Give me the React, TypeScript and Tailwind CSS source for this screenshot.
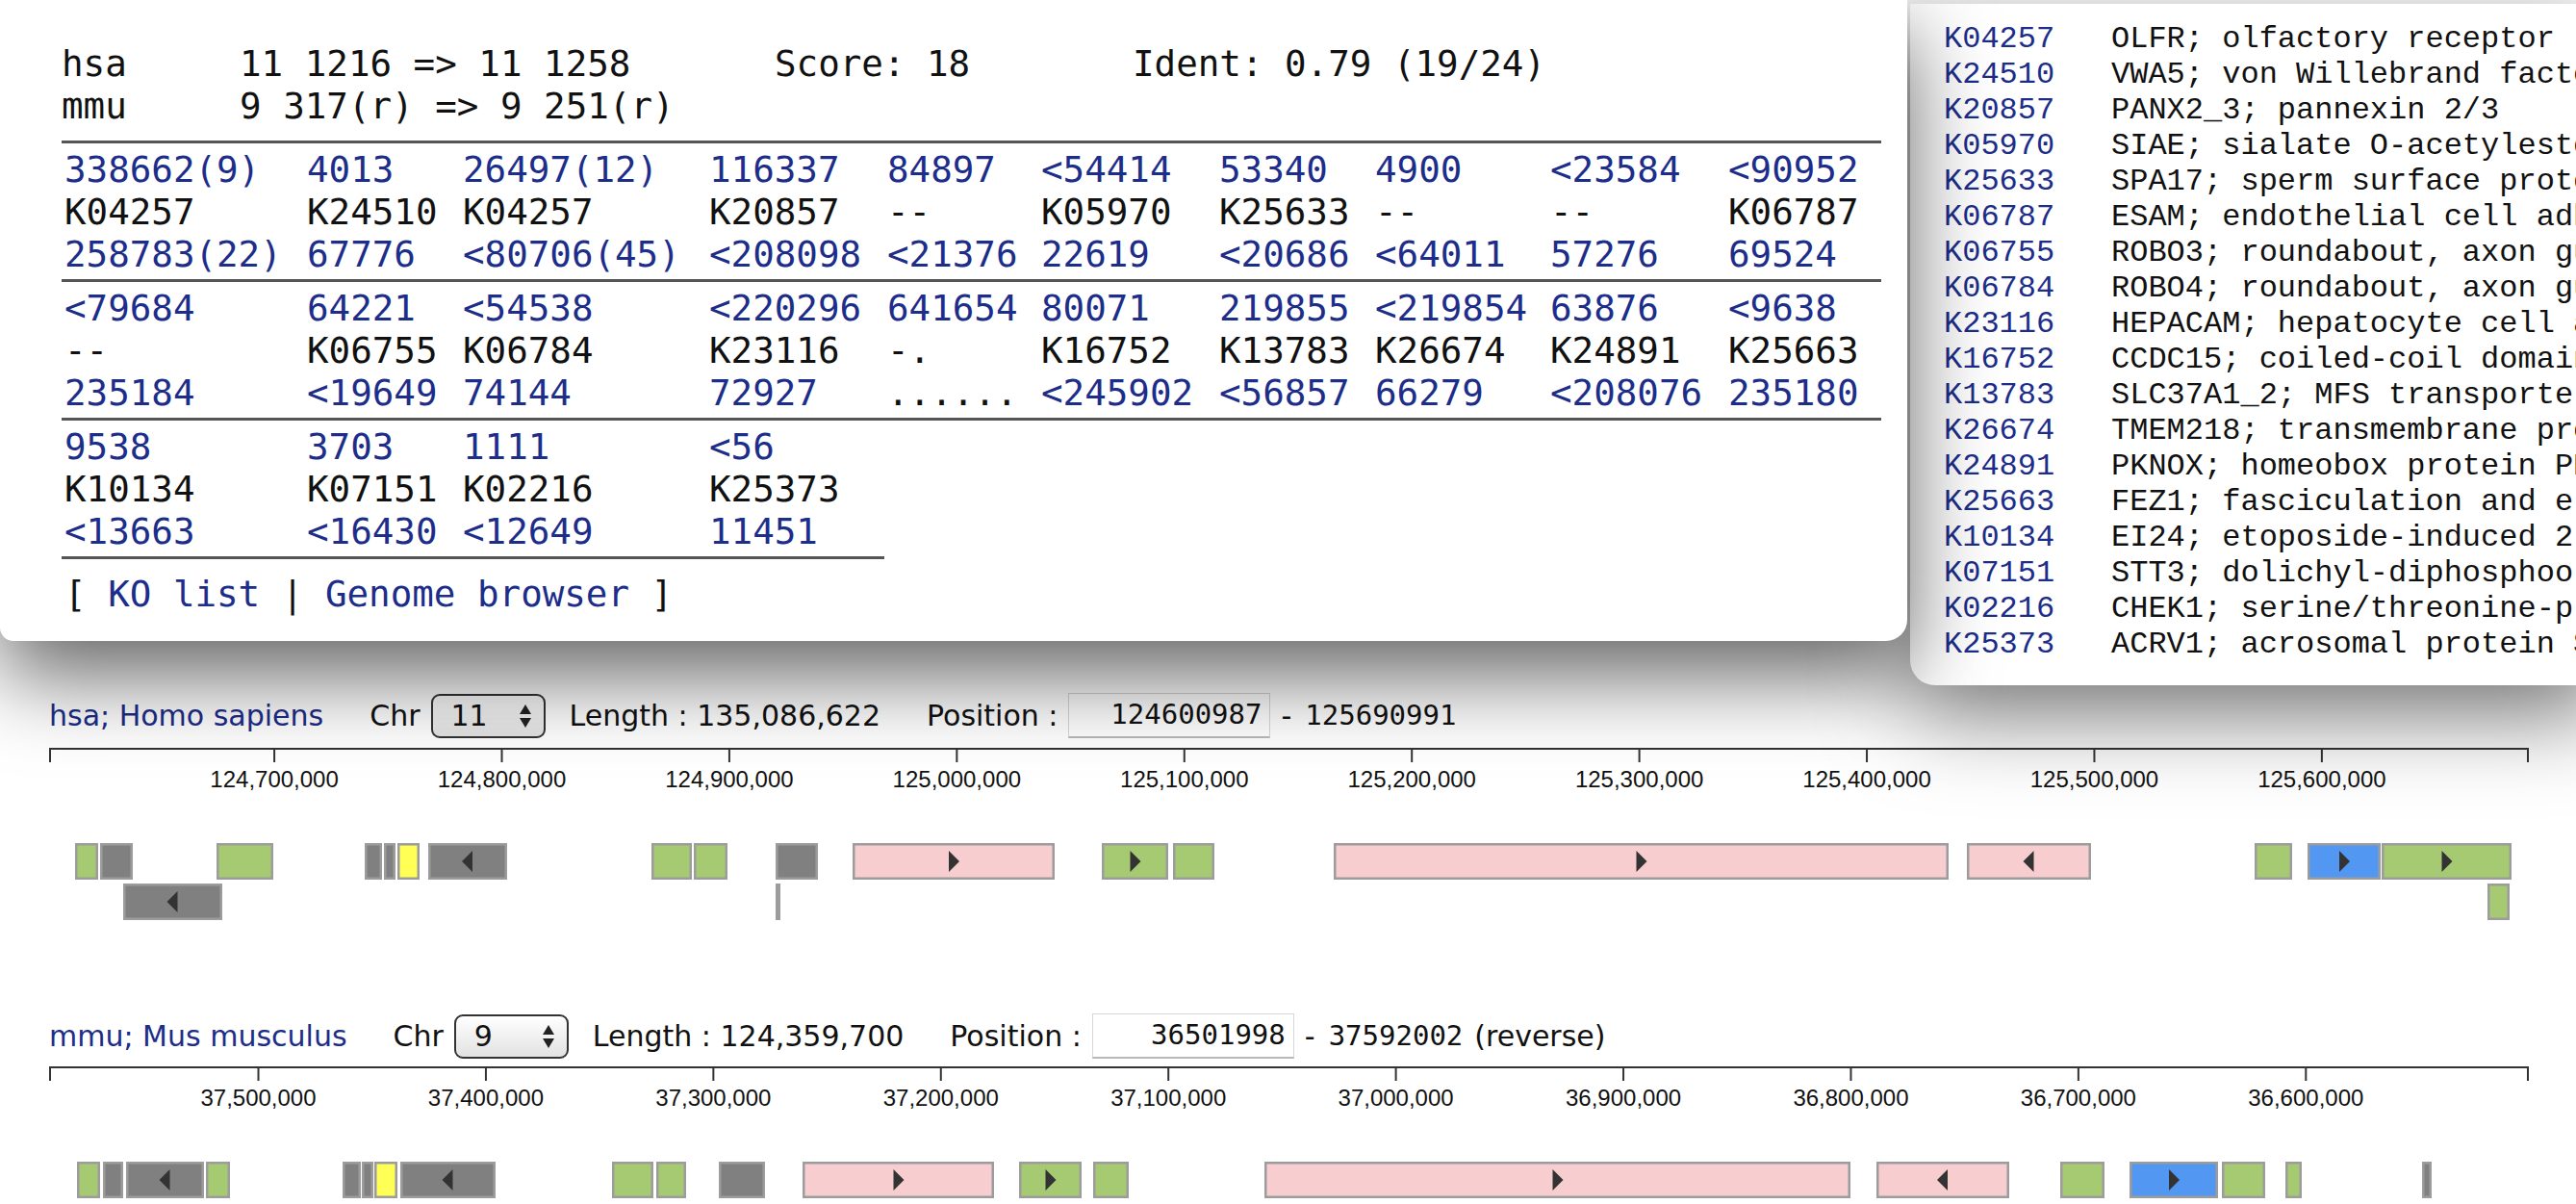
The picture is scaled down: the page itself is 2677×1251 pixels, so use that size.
type Gene = [number, number, string, ('l' | 'r')?, number?]

const GREEN = '#a6ca72'
const GRAY = '#808080'
const YELLOW = '#ffff55'
const PINK = '#f7cdd0'
const BLUE = '#5297f2'

const hsaGenes: Gene[] = [
    [78, 102, GREEN], [104, 138, GRAY], [225, 284, GREEN],
    [379, 397, GRAY], [399, 411, GRAY], [413, 436, YELLOW], [445, 527, GRAY, 'l'],
    [677, 719, GREEN], [721, 756, GREEN], [806, 850, GRAY],
    [886, 1096, PINK, 'r'], [1145, 1214, GREEN, 'r'], [1219, 1262, GREEN],
    [1386, 2025, PINK, 'r'], [2044, 2173, PINK, 'l'],
    [2343, 2382, GREEN], [2398, 2474, BLUE, 'r'], [2475, 2610, GREEN, 'r'],
    [128, 231, GRAY, 'l', 1], [806, 811, GRAY, undefined, 1], [2585, 2608, GREEN, undefined, 1],
]

const mmuGenes: Gene[] = [
    [80, 104, GREEN], [107, 128, GRAY], [131, 212, GRAY, 'l'], [214, 239, GREEN],
    [356, 375, GRAY], [376, 388, GRAY], [389, 413, YELLOW], [416, 515, GRAY, 'l'],
    [636, 679, GREEN], [682, 713, GREEN], [747, 795, GRAY],
    [834, 1033, PINK, 'r'], [1059, 1124, GREEN, 'r'], [1136, 1173, GREEN],
    [1314, 1923, PINK, 'r'], [1950, 2088, PINK, 'l'],
    [2141, 2187, GREEN], [2213, 2305, BLUE, 'r'], [2309, 2354, GREEN],
    [2375, 2392, GREEN], [2517, 2527, GRAY],
]

const PX_PER_BP = 2577 / 1090004

const hsaTicks = [124700000, 124800000, 124900000, 125000000, 125100000, 125200000, 125300000, 125400000, 125500000, 125600000]
    .map(v => ({ x: 51 + (v - 124600987) * PX_PER_BP, label: v.toLocaleString('en-US') }))
const mmuTicks = [37500000, 37400000, 37300000, 37200000, 37100000, 37000000, 36900000, 36800000, 36700000, 36600000]
    .map(v => ({ x: 51 + (37592002 - v) * PX_PER_BP, label: v.toLocaleString('en-US') }))

const row1 = [
    ['338662(9)', 'K04257', '258783(22)'], ['4013', 'K24510', '67776'], ['26497(12)', 'K04257', '<80706(45)'],
    ['116337', 'K20857', '<208098'], ['84897', '--', '<21376'], ['<54414', 'K05970', '22619'],
    ['53340', 'K25633', '<20686'], ['4900', '--', '<64011'], ['<23584', '--', '57276'], ['<90952', 'K06787', '69524'],
]
const row2 = [
    ['<79684', '--', '235184'], ['64221', 'K06755', '<19649'], ['<54538', 'K06784', '74144'],
    ['<220296', 'K23116', '72927'], ['641654', '-.', '......'], ['80071', 'K16752', '<245902'],
    ['219855', 'K13783', '<56857'], ['<219854', 'K26674', '66279'], ['63876', 'K24891', '<208076'], ['<9638', 'K25663', '235180'],
]
const row3 = [
    ['9538', 'K10134', '<13663'], ['3703', 'K07151', '<16430'], ['1111', 'K02216', '<12649'], ['<56', 'K25373', '11451'],
]

const koList = [
    ['K04257', 'OLFR; olfactory receptor'],
    ['K24510', 'VWA5; von Willebrand factor A domain-containing protein 5'],
    ['K20857', 'PANX2_3; pannexin 2/3'],
    ['K05970', 'SIAE; sialate O-acetylesterase'],
    ['K25633', 'SPA17; sperm surface protein Sp17'],
    ['K06787', 'ESAM; endothelial cell adhesion molecule'],
    ['K06755', 'ROBO3; roundabout, axon guidance receptor 3'],
    ['K06784', 'ROBO4; roundabout, axon guidance receptor 4'],
    ['K23116', 'HEPACAM; hepatocyte cell adhesion molecule'],
    ['K16752', 'CCDC15; coiled-coil domain-containing protein 15'],
    ['K13783', 'SLC37A1_2; MFS transporter, OPA family'],
    ['K26674', 'TMEM218; transmembrane protein 218'],
    ['K24891', 'PKNOX; homeobox protein PKNOX'],
    ['K25663', 'FEZ1; fasciculation and elongation protein zeta-1'],
    ['K10134', 'EI24; etoposide-induced 2.4 mRNA'],
    ['K07151', 'STT3; dolichyl-diphosphooligosaccharide--protein glycosyltransferase'],
    ['K02216', 'CHEK1; serine/threonine-protein kinase Chk1'],
    ['K25373', 'ACRV1; acrosomal protein SP-10'],
]

function Cell({ lines }: { lines: string[] }) {
    return (
        <div className="flex flex-col pl-[3px]">
            {lines.map((t, i) => {
                const plain = i === 1 || /^[-.]+$/.test(t)
                return <span key={i} className={plain ? 'text-[#111]' : 'text-[#1c2d8a]'}>{t}</span>
            })}
        </div>
    )
}

function AlignPopup() {
    return (
        <div className="absolute left-0 top-0 z-20 h-[666px] w-[1982px] rounded-bl-[14px] rounded-br-[22px] bg-white pl-[64px] pt-[44px] font-['DejaVu_Sans_Mono',monospace] text-[37.5px] leading-[44px] text-[#111] whitespace-pre shadow-[0_35px_90px_rgba(0,0,0,0.62)]">
            <div className="flex">
                <span className="w-[185px]">hsa</span>
                <span className="w-[556px]">11 1216 =&gt; 11 1258</span>
                <span className="w-[372px]">Score: 18</span>
                <span>Ident: 0.79 (19/24)</span>
            </div>
            <div className="flex">
                <span className="w-[185px]">mmu</span>
                <span>9 317(r) =&gt; 9 251(r)</span>
            </div>
            <div className="mt-[14px] h-[3px] w-[1891px] bg-[#555]" />
            <div className="grid w-fit grid-cols-[252px_162px_256px_185px_160px_185px_162px_182px_185px_162px] border-b-[3px] border-[#555] pt-[5px] pb-[4px]">
                {row1.map((c, i) => <Cell key={i} lines={c} />)}
            </div>
            <div className="grid w-fit grid-cols-[252px_162px_256px_185px_160px_185px_162px_182px_185px_162px] border-b-[3px] border-[#555] pt-[5px] pb-[4px]">
                {row2.map((c, i) => <Cell key={i} lines={c} />)}
            </div>
            <div className="grid w-fit grid-cols-[252px_162px_256px_185px] border-b-[3px] border-[#555] pt-[5px] pb-[4px]">
                {row3.map((c, i) => <Cell key={i} lines={c} />)}
            </div>
            <div className="mt-[14px] pl-[3px]">
                [ <span className="text-[#1c2d8a]">KO list</span> | <span className="text-[#1c2d8a]">Genome browser</span> ]
            </div>
        </div>
    )
}

function KoPanel() {
    return (
        <div className="absolute left-[1985px] top-[4px] z-10 h-[708px] w-[720px] rounded-bl-[26px] bg-white pl-[35px] pt-[18px] font-['Liberation_Mono',monospace] text-[32px] leading-[37px] text-[#111] shadow-[0_30px_90px_rgba(0,0,0,0.55)]">
            {koList.map(([ko, desc]) => (
                <div key={ko} className="flex whitespace-pre">
                    <span className="w-[174px] shrink-0 text-[#1c2d8a]">{ko}</span>
                    <span>{desc}</span>
                </div>
            ))}
        </div>
    )
}

function ChrSelect({ value }: { value: string }) {
    return (
        <div className="ml-[11px] flex h-[46px] w-[119px] items-center justify-between rounded-[9px] border-2 border-[#333] bg-gradient-to-b from-white to-[#e2e2e2] pl-[19px] pr-[13px]">
            <span>{value}</span>
            <svg width="12" height="24" viewBox="0 0 12 24">
                <path d="M6 0 L12 10 L0 10 Z" fill="#222" />
                <path d="M0 14 L12 14 L6 24 Z" fill="#222" />
            </svg>
        </div>
    )
}

function TrackHeader({ name, chr, length, from, to, reverse }: { name: string, chr: string, length: string, from: string, to: string, reverse?: boolean }) {
    return (
        <div className="flex h-[47px] items-center whitespace-nowrap pl-[51px]">
            <span className="text-[#1c2d8a]">{name}</span>
            <span className="ml-[48px]">Chr</span>
            <ChrSelect value={chr} />
            <span className="ml-[25px]">Length : {length}</span>
            <span className="ml-[48px]">Position :</span>
            <div className="ml-[11px] flex h-[47px] w-[210px] items-center justify-end border border-[#d6d6d6] border-b-2 border-b-[#b8b8b8] bg-white pr-[8px] font-['DejaVu_Sans_Mono',monospace] text-[29px]">
                {from}
            </div>
            <span className="ml-[11px]">-</span>
            <span className="ml-[14px] font-['DejaVu_Sans_Mono',monospace] text-[29px]">{to}</span>
            {reverse && <span className="ml-[12px]">(reverse)</span>}
        </div>
    )
}

function Track({ ticks, genes, axisY, height }: { ticks: { x: number, label: string }[], genes: Gene[], axisY: number, height: number }) {
    const laneTop = axisY + 98
    return (
        <svg width="2677" height={height} className="block">
            <line x1="51" y1={axisY} x2="2628" y2={axisY} stroke="#333" strokeWidth="2" />
            <line x1="52" y1={axisY} x2="52" y2={axisY + 14} stroke="#333" strokeWidth="2" />
            <line x1="2627" y1={axisY} x2="2627" y2={axisY + 14} stroke="#333" strokeWidth="2" />
            {ticks.map(t => (
                <g key={t.label}>
                    <line x1={t.x} y1={axisY} x2={t.x} y2={axisY + 14} stroke="#333" strokeWidth="2" />
                    <text x={t.x} y={axisY + 40} textAnchor="middle" fontFamily="'Liberation Sans', Arial, sans-serif" fontSize="24" fill="#111">{t.label}</text>
                </g>
            ))}
            {genes.map(([x1, x2, fill, dir, lane], i) => {
                const y = laneTop + (lane ? 42 : 0)
                const cx = (x1 + x2) / 2
                const cy = y + 19
                return (
                    <g key={i}>
                        <rect x={x1 + 1.25} y={y + 1.25} width={Math.max(x2 - x1 - 2.5, 1)} height={35.5} fill={fill} stroke="#9c9c9c" strokeWidth="2.5" />
                        {dir === 'r' && <path d={`M${cx - 5} ${cy - 11} L${cx + 6} ${cy} L${cx - 5} ${cy + 11} Z`} fill="#333" />}
                        {dir === 'l' && <path d={`M${cx + 5} ${cy - 11} L${cx - 6} ${cy} L${cx + 5} ${cy + 11} Z`} fill="#333" />}
                    </g>
                )
            })}
        </svg>
    )
}

export default function App() {
    return (
        <div className="relative h-[1251px] w-[2677px] overflow-hidden bg-white">
            <main className="pt-[720px] font-['DejaVu_Sans',sans-serif] text-[30px] text-[#111]">
                <TrackHeader name="hsa; Homo sapiens" chr="11" length="135,086,622" from="124600987" to="125690991" />
                <Track ticks={hsaTicks} genes={hsaGenes} axisY={11} height={200} />
                <div className="mt-[86px]">
                    <TrackHeader name="mmu; Mus musculus" chr="9" length="124,359,700" from="36501998" to="37592002" reverse />
                </div>
                <Track ticks={mmuTicks} genes={mmuGenes} axisY={9} height={151} />
            </main>
            <KoPanel />
            <AlignPopup />
        </div>
    )
}
